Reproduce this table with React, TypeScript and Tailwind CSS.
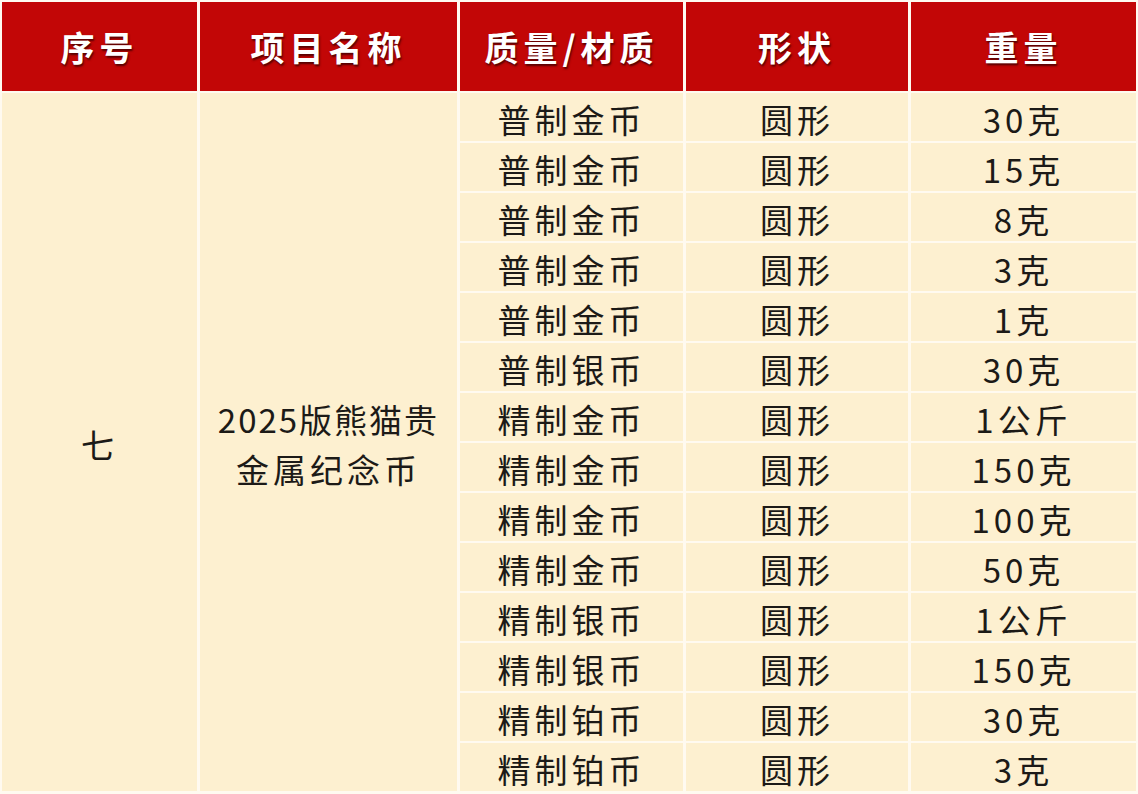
const headers = ['序号', '项目名称', '质量/材质', '形状', '重量'];

const rows: [string, string][] = [
  ['普制金币', '30克'],
  ['普制金币', '15克'],
  ['普制金币', '8克'],
  ['普制金币', '3克'],
  ['普制金币', '1克'],
  ['普制银币', '30克'],
  ['精制金币', '1公斤'],
  ['精制金币', '150克'],
  ['精制金币', '100克'],
  ['精制金币', '50克'],
  ['精制银币', '1公斤'],
  ['精制银币', '150克'],
  ['精制铂币', '30克'],
  ['精制铂币', '3克'],
];

const cell =
  'flex items-center justify-center bg-[#fdf0d0] text-[33px] tracking-[4px] text-[#1c1a17] pt-[4px]';

export default function App() {
  return (
    <div
      className="h-[794px] w-[1138px] overflow-hidden bg-[#fffaf0] px-[2px] pt-[2px]"
      style={{ fontFamily: '"Noto Sans CJK SC", "Liberation Sans", sans-serif' }}
    >
      <div className="grid grid-cols-[195px_257px_223px_222px_225px] grid-rows-[89px_repeat(14,48px)] gap-x-[3px] gap-y-[2px]">
        {headers.map((h) => (
          <div
            key={h}
            className="flex items-center justify-center bg-[#c20606] text-[34px] font-bold tracking-[5px] text-white [text-shadow:1px_2px_2px_rgba(60,0,0,0.8)]"
          >
            {h}
          </div>
        ))}

        <div className={`${cell} col-start-1 row-start-2 row-span-14 leading-none`}>七</div>
        <div className={`${cell} col-start-2 row-start-2 row-span-14 flex-col`}>
          <span className="block leading-[50px] tracking-[2px]">2025版熊猫贵</span>
          <span className="block leading-[50px]">金属纪念币</span>
        </div>

        {rows.map(([material, weight], i) => (
          <div key={i} className="contents">
            <div className={`${cell} col-start-3 leading-none`}>{material}</div>
            <div className={`${cell} col-start-4 leading-none`}>圆形</div>
            <div className={`${cell} col-start-5 leading-none`}>{weight}</div>
          </div>
        ))}
      </div>
    </div>
  );
}
